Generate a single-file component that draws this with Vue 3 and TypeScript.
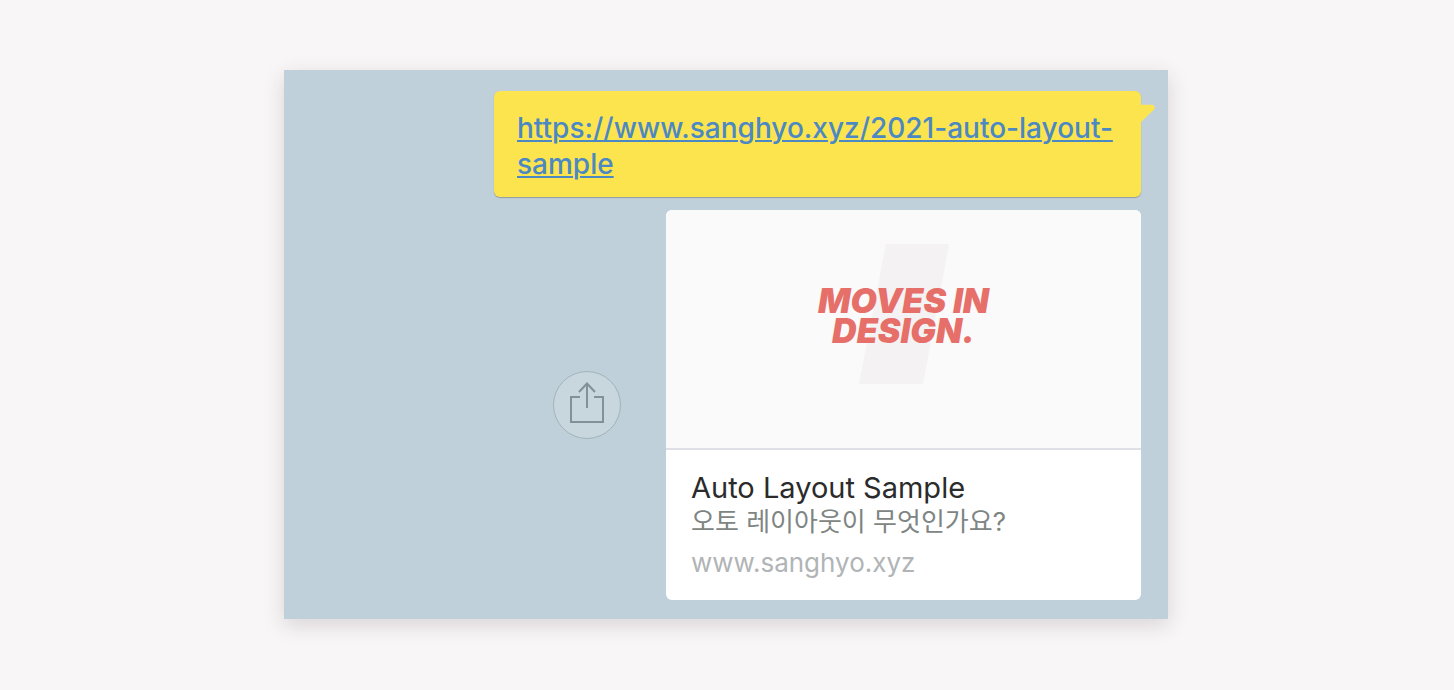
<script setup lang="ts">
interface LinkPreview {
  title: string
  description: string
  host: string
}

const href = 'https://www.sanghyo.xyz/2021-auto-layout-sample'
const preview: LinkPreview = {
  title: 'Auto Layout Sample',
  description: '오토 레이아웃이 무엇인가요?',
  host: 'www.sanghyo.xyz',
}
</script>

<template>
  <main class="page">
    <section class="chat">
      <div class="bubble">
        <a class="link" :href="href">{{ href }}</a>
        <svg class="tail" viewBox="0 0 14 19" aria-hidden="true">
          <path d="M0 .8H11Q15 1.4 13 5.5L0 18Z" />
        </svg>
      </div>
      <div class="row">
        <button class="share" type="button" aria-label="Share">
          <svg viewBox="0 0 36 42" aria-hidden="true">
            <path d="M11 15H2V40H34V15H25M18 26V2M10 10L18 1.5L26 10" />
          </svg>
        </button>
        <a class="card" :href="href">
          <span class="cover">
            <svg class="slash" viewBox="0 0 90 140" aria-hidden="true">
              <path d="M27 0H90L64 140H0Z" />
            </svg>
            <span class="brand">MOVES IN<br>DESIGN.</span>
          </span>
          <span class="info">
            <span class="title">{{ preview.title }}</span>
            <span class="description">{{ preview.description }}</span>
            <span class="host">{{ preview.host }}</span>
          </span>
        </a>
      </div>
    </section>
  </main>
</template>

<style>
body {
  margin: 0;
  background: #f8f6f7;
}
</style>

<style scoped>
.page {
  box-sizing: border-box;
  min-height: 100vh;
  padding: 70px 18px 70px 16px;
  background: #f8f6f7;
  font-family: Inter, "Noto Sans CJK KR", sans-serif;
}

.chat {
  box-sizing: border-box;
  max-width: 884px;
  margin: 0 auto;
  padding: 21px 27px 19px;
  display: flex;
  flex-direction: column;
  align-items: flex-end;
  gap: 13px;
  background: #c0d0da;
  box-shadow: 0 6px 20px rgba(60, 40, 50, 0.16);
}

.bubble {
  position: relative;
  box-sizing: border-box;
  max-width: 647px;
  padding: 19px 23px 15px;
  border-radius: 6px;
  background: #fbe44d;
  box-shadow: 0 1px 1px rgba(90, 90, 90, 0.45);
}

.link {
  display: block;
  color: #4b88c4;
  font-size: 28px;
  font-weight: 500;
  line-height: 36px;
  overflow-wrap: anywhere;
  text-decoration-thickness: 2px;
  text-underline-offset: 2px;
}

.tail {
  position: absolute;
  top: 13px;
  left: 100%;
  width: 14px;
  height: 19px;
  fill: #fbe44d;
}

.row {
  width: 100%;
  display: flex;
  justify-content: flex-end;
  align-items: center;
  gap: 45px;
}

.share {
  flex: none;
  width: 68px;
  height: 68px;
  padding: 0 0 4px;
  display: flex;
  align-items: center;
  justify-content: center;
  border: 1px solid #a3b3bb;
  border-radius: 50%;
  background: #c8d6dd;
}

.share svg {
  width: 36px;
  height: 42px;
  fill: none;
  stroke: #819198;
  stroke-width: 2;
}

.card {
  width: 475px;
  overflow: hidden;
  border-radius: 6px;
  background: #fff;
  text-decoration: none;
}

.cover {
  position: relative;
  display: flex;
  justify-content: center;
  padding: 34px 0 64px;
  border-bottom: 2px solid #dfe0e5;
  background: #fafafa;
}

.slash {
  width: 90px;
  height: 140px;
  fill: #f4f2f3;
}

.brand {
  position: absolute;
  top: 76px;
  left: 0;
  width: 100%;
  color: #e66f69;
  font-size: 34px;
  font-style: italic;
  font-weight: 900;
  line-height: 30px;
  text-align: center;
}

.info {
  display: flex;
  flex-direction: column;
  padding: 20px 25px;
}

.title {
  color: #2b2b2b;
  font-size: 29px;
  line-height: 36px;
}

.description {
  color: #7e8583;
  font-size: 26px;
  line-height: 32px;
}

.host {
  margin-top: 7px;
  color: #b1b4b6;
  font-size: 26px;
  line-height: 35px;
}
</style>
